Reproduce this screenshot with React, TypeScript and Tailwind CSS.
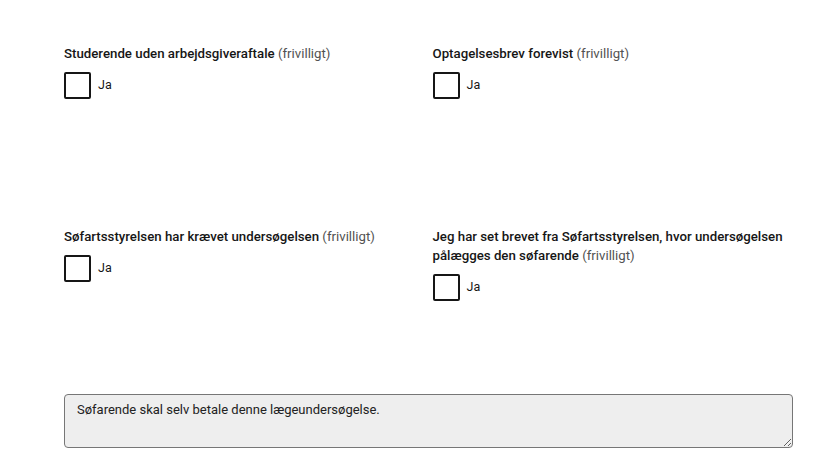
import React from "react";

const fields = [
    { label: "Studerende uden arbejdsgiveraftale", h: "h-[183px]" },
    { label: "Optagelsesbrev forevist", h: "h-[183px]" },
    { label: "Søfartsstyrelsen har krævet undersøgelsen", h: "h-[167px]" },
    { label: "Jeg har set brevet fra Søfartsstyrelsen, hvor undersøgelsen pålægges den søfarende", h: "h-[167px]" },
];

const CheckField = ({ label, h }: { label: string; h: string }) => (
    <div className={h}>
        <div className="text-[13.25px] leading-[19px] text-[#161616] font-medium">
            {label} <span className="font-normal text-[#525252]">(frivilligt)</span>
        </div>
        <label className="mt-[9px] flex items-center gap-[7px]">
            <span className="w-[27px] h-[27px] border-2 border-[#161616] rounded-[2px] bg-white" />
            <span className="text-[12.5px] text-[#161616]">Ja</span>
        </label>
    </div>
);

export default function App() {
    return (
        <div className="w-[833px] h-[472px] bg-white pt-[44px] pl-[64px]" style={{ fontFamily: 'Roboto, sans-serif' }}>
            <div className="w-[729px]">
                <div className="grid grid-cols-2 gap-x-[8px]">
                    {fields.map(f => (
                        <CheckField key={f.label} label={f.label} h={f.h} />
                    ))}
                </div>
                <textarea
                    readOnly
                    defaultValue="Søfarende skal selv betale denne lægeundersøgelse."
                    className="block w-full h-[54px] bg-[#eeeeee] border border-[#767676] rounded-[4px] px-[12px] py-[5px] text-[13px] text-[#222] outline-none"
                    style={{ fontFamily: 'Roboto, sans-serif' }}
                />
            </div>
        </div>
    );
}
